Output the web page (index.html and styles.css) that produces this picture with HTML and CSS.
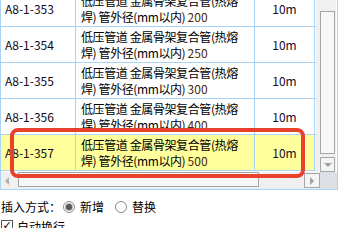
FILE: index.html
```html
<!DOCTYPE html>
<html lang="zh-CN">
<head>
<meta charset="utf-8">
<link rel="stylesheet" href="styles.css">
</head>
<body>
<div class="page">
  <div class="grid">
    <div class="main">
      <div class="rows">
        <div class="rows-inner">
          <div class="row">
            <div class="cell code">A8-1-353</div>
            <div class="cell desc"><div class="desc-text">低压管道 金属骨架复合管(热熔<br>焊) 管外径(mm以内) <span class="num">200</span></div></div>
            <div class="cell unit">10m</div>
          </div>
          <div class="row">
            <div class="cell code">A8-1-354</div>
            <div class="cell desc"><div class="desc-text">低压管道 金属骨架复合管(热熔<br>焊) 管外径(mm以内) <span class="num">250</span></div></div>
            <div class="cell unit">10m</div>
          </div>
          <div class="row">
            <div class="cell code">A8-1-355</div>
            <div class="cell desc"><div class="desc-text">低压管道 金属骨架复合管(热熔<br>焊) 管外径(mm以内) <span class="num">300</span></div></div>
            <div class="cell unit">10m</div>
          </div>
          <div class="row">
            <div class="cell code">A8-1-356</div>
            <div class="cell desc"><div class="desc-text">低压管道 金属骨架复合管(热熔<br>焊) 管外径(mm以内) <span class="num">400</span></div></div>
            <div class="cell unit">10m</div>
          </div>
          <div class="row selected">
            <div class="cell code">A8-1-357</div>
            <div class="cell desc"><div class="desc-text">低压管道 金属骨架复合管(热熔<br>焊) 管外径(mm以内) <span class="num">500</span></div></div>
            <div class="cell unit">10m</div>
          </div>
        </div>
      </div>
      <div class="vscroll">
        <div class="vthumb"></div>
        <div class="vbtn"><span class="tri-down"></span></div>
      </div>
    </div>
    <div class="hscroll">
      <div class="hbtn-left"><span class="tri-left"></span></div>
      <div class="hthumb"></div>
      <div class="htrack"></div>
      <div class="hbtn-right"><span class="tri-right"></span></div>
      <div class="corner"></div>
    </div>
  </div>

  <div class="options">
    <span class="label">插入方式：</span>
    <span class="radio checked"></span><span class="opt-text">新增</span>
    <span class="radio second"></span><span class="opt-text">替换</span>
  </div>
  <div class="check-row">
    <span class="checkbox">✓</span><span class="opt-text">自动换行</span>
  </div>

  <div class="highlight-box"></div>
</div>
</body>
</html>
```
FILE: styles.css
```css
html, body {
  margin: 0;
  padding: 0;
  background: #ffffff;
}
body {
  font-family: "Noto Sans CJK SC", "Noto Sans", sans-serif;
  font-size: 12px;
  color: #000;
  width: 345px;
  height: 228px;
  overflow: hidden;
}
.page {
  position: relative;
  width: 345px;
  height: 228px;
  overflow: hidden;
}
.grid {
  width: 336px;
  border-left: 1px solid #a9d4f5;
  border-right: 1px solid #a9d4f5;
  border-bottom: 1px solid #a9d4f5;
}
.main {
  display: flex;
  height: 172px;
}
.rows {
  width: 315px;
  height: 172px;
  overflow: hidden;
}
.rows-inner {
  margin-top: -9px;
}
.row {
  display: flex;
  height: 35px;
  border-bottom: 1px solid #a9d4f5;
}
.row.selected {
  background: #ffff9c;
}
.cell {
  display: flex;
  align-items: center;
  border-right: 1px solid #a9d4f5;
  white-space: nowrap;
  overflow: hidden;
  flex: none;
}
.code {
  width: 70px;
  padding-left: 4px;
  color: #0a0a1a;
}
.desc {
  width: 179px;
  box-sizing: border-box;
  padding-left: 5px;
  padding-top: 1px;
}
.desc-text {
  line-height: 16px;
  letter-spacing: -0.4px;
}
.num {
  color: #4a2a0a;
  letter-spacing: 0;
}
.unit {
  width: 59px;
  justify-content: center;
  color: #1a0a30;
}
.vscroll {
  width: 20px;
  height: 172px;
  background: #f0f0f0;
  display: flex;
  flex-direction: column;
  padding-top: 11px;
  padding-left: 4px;
  box-sizing: border-box;
  flex: none;
}
.vthumb {
  width: 15px;
  height: 143px;
  box-sizing: border-box;
  border: 1px solid #a6a6a6;
  background: #f7f7f7;
}
.vbtn {
  margin-top: 3px;
  width: 15px;
  height: 15px;
  box-sizing: border-box;
  border: 1px solid #a6a6a6;
  background: #f4f4f4;
  display: flex;
  align-items: center;
  justify-content: center;
}
.tri-down {
  width: 0;
  height: 0;
  border-left: 4px solid transparent;
  border-right: 4px solid transparent;
  border-top: 4px solid #a0a0a0;
}
.hscroll {
  display: flex;
  height: 17px;
  background: #f0f0f0;
}
.hbtn-left {
  width: 17px;
  display: flex;
  align-items: center;
  justify-content: center;
}
.tri-left {
  width: 0;
  height: 0;
  border-top: 4px solid transparent;
  border-bottom: 4px solid transparent;
  border-right: 4px solid #b0b0b0;
  margin-right: 6px;
}
.hthumb {
  width: 241px;
  height: 15px;
  box-sizing: border-box;
  border: 1px solid #a6a6a6;
  background: #f7f7f7;
}
.htrack {
  flex: 1;
}
.hbtn-right {
  width: 16px;
  height: 15px;
  margin-top: 1px;
  box-sizing: border-box;
  border: 1px solid #a6a6a6;
  background: #f4f4f4;
  display: flex;
  align-items: center;
  justify-content: center;
}
.tri-right {
  width: 0;
  height: 0;
  border-top: 4px solid transparent;
  border-bottom: 4px solid transparent;
  border-left: 4px solid #a0a0a0;
}
.corner {
  width: 17px;
  background: #dcdfe3;
}
.options {
  display: flex;
  align-items: center;
  height: 16px;
  margin-top: 9px;
  padding-left: 1px;
  line-height: 16px;
}
.label {
  width: 62px;
}
.radio {
  width: 12px;
  height: 12px;
  box-sizing: border-box;
  border: 1px solid #8c8c8c;
  border-radius: 50%;
  background: #fff;
  margin-right: 5px;
  display: inline-flex;
  align-items: center;
  justify-content: center;
}
.radio.checked::after {
  content: "";
  width: 6px;
  height: 6px;
  border-radius: 50%;
  background: #5a5a5a;
  box-shadow: 0 0 0 1px #b5b5b5;
}
.radio.second {
  margin-left: 11px;
}
.opt-text {
  color: #000;
}
.check-row {
  display: flex;
  align-items: center;
  height: 16px;
  margin-top: 3px;
  padding-left: 1px;
}
.checkbox {
  width: 12px;
  height: 12px;
  box-sizing: border-box;
  border: 1px solid #555;
  background: #fff;
  font-size: 11px;
  line-height: 10px;
  text-align: center;
  margin-right: 4px;
  font-family: "DejaVu Sans", sans-serif;
  font-weight: bold;
}
.highlight-box {
  position: absolute;
  left: 10px;
  top: 128px;
  width: 295px;
  height: 50px;
  box-sizing: border-box;
  border: 4px solid #e8412c;
  border-radius: 8px;
}
```
